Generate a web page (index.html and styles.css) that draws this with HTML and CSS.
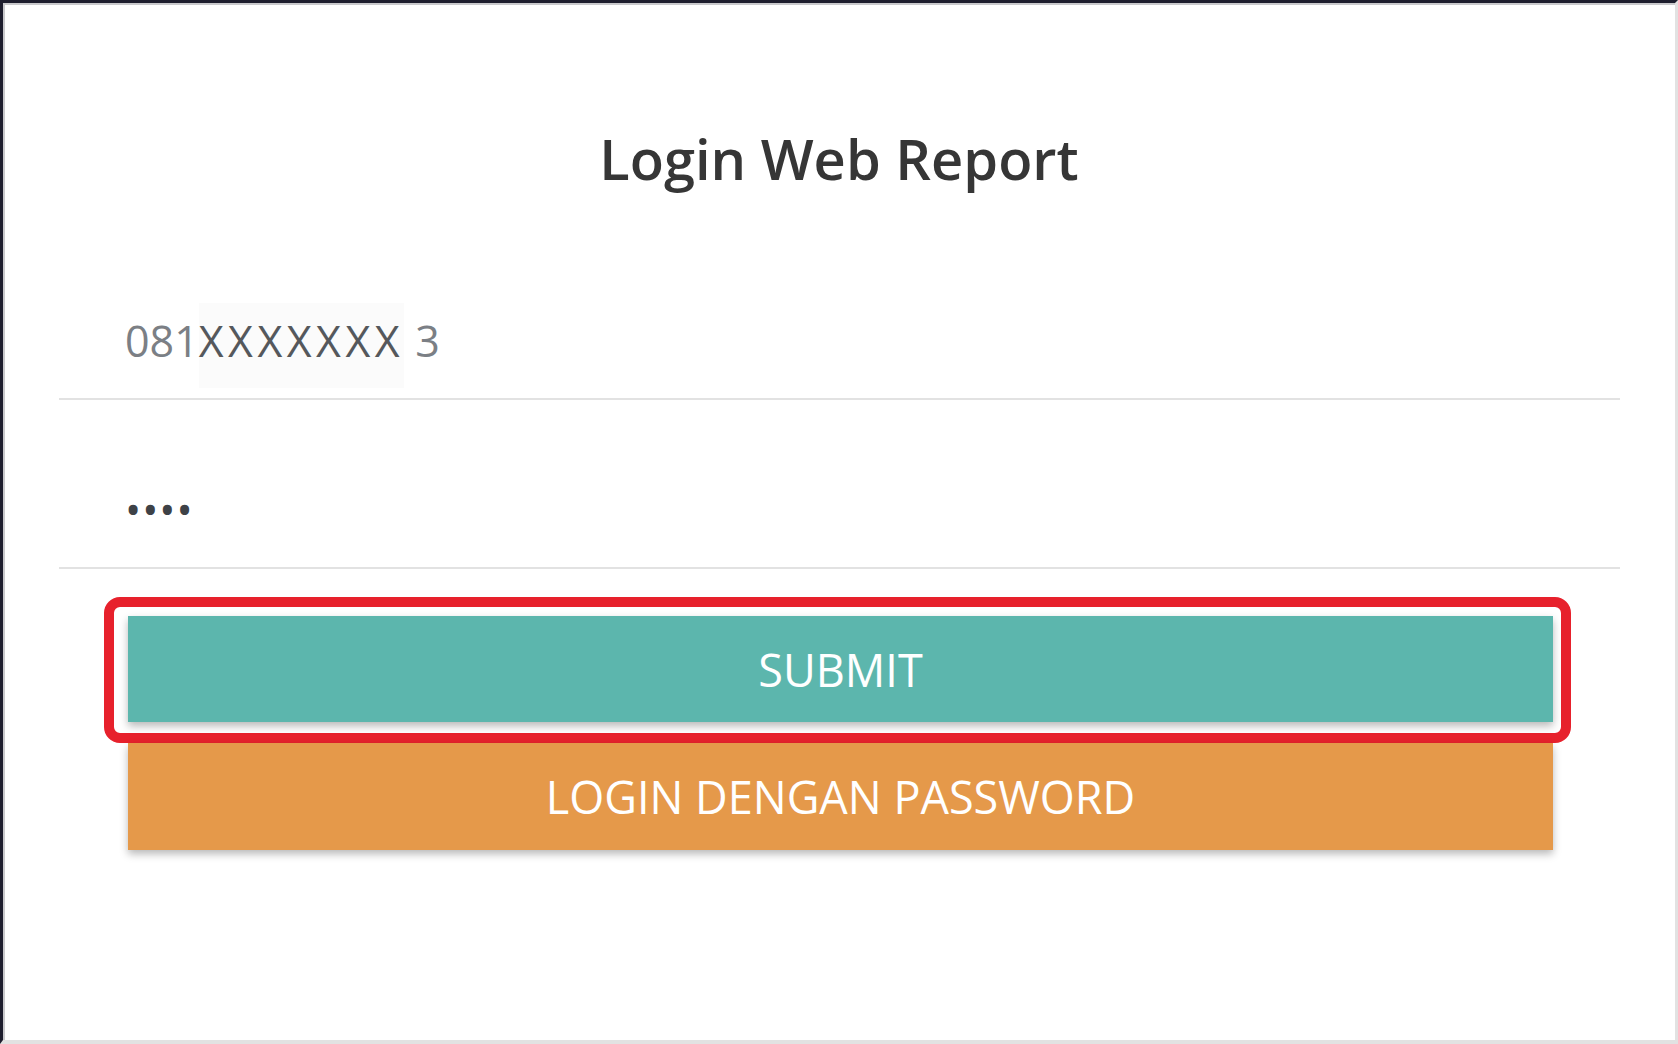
FILE: index.html
```html
<!DOCTYPE html>
<html lang="id">
<head>
    <meta charset="UTF-8">
    <meta name="viewport" content="width=device-width, initial-scale=1.0">
    <title>Login Web Report</title>
    <link rel="stylesheet" href="styles.css">
</head>
<body>

<div class="frame">
    <h1 class="title">Login Web Report</h1>

    <!-- Form login -->
    <form class="login-form" id="loginForm">
        <div class="field">
            <span class="field-value">081<span class="masked">XXXXXXX</span> 3</span>
        </div>
        <div class="field">
            <span class="field-value dots">&bull;&bull;&bull;&bull;</span>
        </div>

        <div class="highlight">
            <button type="button" class="btn btn-submit">SUBMIT</button>
        </div>
        <button type="button" class="btn btn-password">LOGIN DENGAN PASSWORD</button>
    </form>
</div>

</body>
</html>
```

FILE: styles.css
```css
/* Halaman login */
html, body {
    margin: 0;
    padding: 0;
    background: #fff;
}
.frame {
    box-sizing: border-box;
    height: 1044px;
    border-top: 3px solid #1e1e2e;
    border-left: 3px solid #1e1e2e;
    border-right: 3px solid #e2e2e2;
    border-bottom: 4px solid #e2e2e2;
    box-shadow: inset 2px 2px 0 #c9c9cc;
    font-family: "Open Sans", "Noto Sans", sans-serif;
}
.title {
    margin: 112px 0 30px;
    font-size: 56px;
    line-height: 86px;
    font-weight: 600;
    color: #363636;
    text-align: center;
}
.login-form {
    padding: 0 55px 0 56px;
}
.field {
    padding: 80px 0 27px 66px;
    border-bottom: 2px solid #e2e2e2;
}
.field-value {
    display: block;
    font-size: 43px;
    line-height: 60px;
    color: #7b7f85;
}
.masked {
    color: #55585c;
    background: #fbfbfb;
    padding: 8px 0 18px;
    letter-spacing: 4.5px;
}
.dots {
    color: #3e4247;
    font-size: 43px;
    letter-spacing: 1px;
}
.highlight {
    margin: 28px 49px 0 45px;
    padding: 9px 8px 11px 14px;
    border: 10px solid #e7212c;
    border-radius: 16px;
}
.btn {
    display: block;
    width: 100%;
    border: none;
    padding: 0;
    font-family: "Open Sans", "Noto Sans", sans-serif;
    font-size: 45px;
    line-height: 1;
    color: #fff;
    text-align: center;
    box-shadow: 0 4px 8px rgba(0, 0, 0, 0.28);
}
.btn-submit {
    height: 106px;
    background-color: #5cb6ad;
}
.btn-password {
    margin: 0 67px 0 69px;
    width: calc(100% - 136px);
    height: 107px;
    background-color: #e5994a;
}
```
